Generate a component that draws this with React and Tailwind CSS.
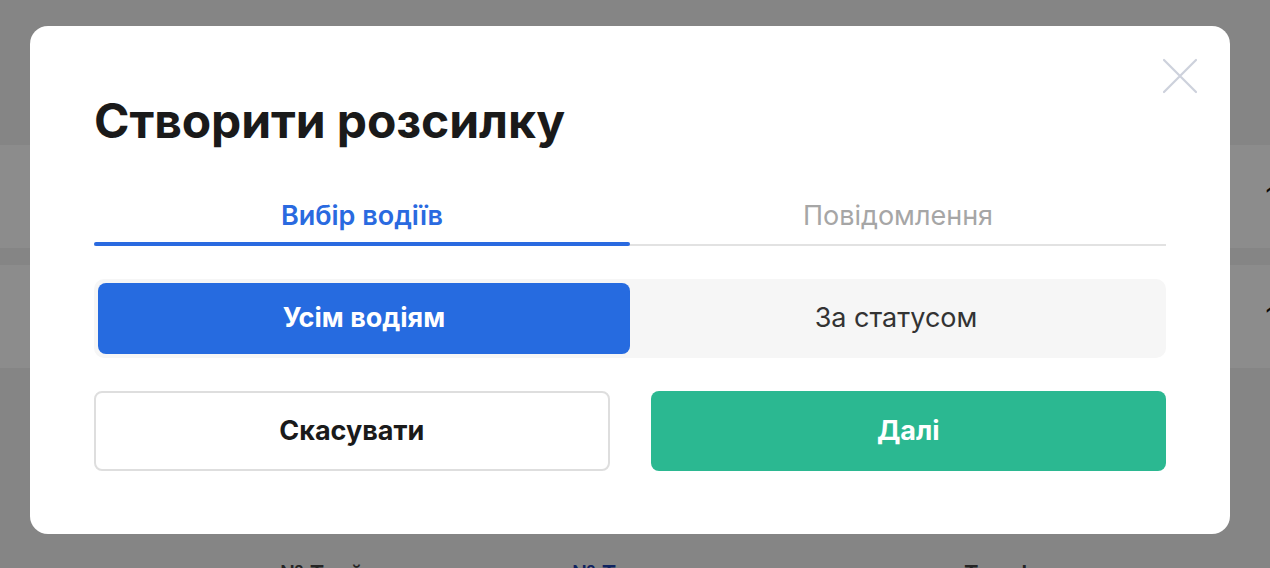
import React from "react";

export default function App() {
  return (
    <div
      className="relative w-full h-[568px] overflow-hidden bg-[#f3f3f3]"
      style={{ fontFamily: "Inter, 'Noto Sans', sans-serif" }}
    >
      {/* page behind the overlay */}
      <div className="flex flex-col pt-[145px]">
        <div className="flex h-[103px] items-center justify-end bg-white">
          <span className="translate-x-[6px] text-[26px] text-[#111]">1</span>
        </div>
        <div className="h-[17px]" />
        <div className="flex h-[103px] items-center justify-end bg-white">
          <span className="translate-x-[6px] text-[26px] text-[#111]">1</span>
        </div>
        <div className="flex pl-[280px] pt-[189px] text-[22px] font-semibold">
          <span className="w-[292px] text-[#444]">№ Трейлера</span>
          <span className="w-[392px] text-[#1e40af]">№ Тягача</span>
          <span className="text-[#444]">Телефон</span>
        </div>
      </div>

      {/* overlay */}
      <div className="absolute inset-0 bg-black/45" />

      {/* modal */}
      <div className="absolute left-[30px] top-[26px] h-[508px] w-[1200px] rounded-[18px] bg-white px-16 pt-[64px]">
        <button className="absolute right-[32px] top-[32px] flex h-[36px] w-[36px] items-center justify-center">
          <svg width="36" height="36" viewBox="0 0 36 36" fill="none">
            <path d="M2 2 L34 34 M34 2 L2 34" stroke="#cdd1dc" strokeWidth="2.2" strokeLinecap="round" />
          </svg>
        </button>

        <h2 className="text-[48px] font-bold leading-[62px] tracking-[-0.1px] text-[#1a1a1a]">
          Створити розсилку
        </h2>

        <div className="mt-[37px] grid grid-cols-2 border-b-2 border-[#e2e2e2]">
          <div className="relative flex h-[55px] items-start justify-center pt-[10px]">
            <span className="text-[27px] font-semibold leading-[34px] text-[#2a6ae0]">Вибір водіїв</span>
            <div className="absolute -bottom-[2px] left-0 right-0 h-[4px] rounded-full bg-[#2a6ae0]" />
          </div>
          <div className="flex h-[55px] items-start justify-center pt-[10px]">
            <span className="text-[27px] font-normal leading-[34px] text-[#a6a6a6]">Повідомлення</span>
          </div>
        </div>

        <div className="mt-[33px] grid h-[79px] grid-cols-2 rounded-[10px] bg-[#f6f6f6] p-1">
          <div className="flex items-center justify-center rounded-[8px] bg-[#266be0] text-[27px] font-bold text-white">
            Усім водіям
          </div>
          <div className="flex items-center justify-center text-[27px] font-normal text-[#333]">
            За статусом
          </div>
        </div>

        <div className="mt-[33px] grid grid-cols-2 gap-[41px]">
          <button className="flex h-[80px] items-center justify-center rounded-[8px] border-2 border-[#dedede] bg-white text-[27px] font-bold text-[#1a1a1a]">
            Скасувати
          </button>
          <button className="flex h-[80px] items-center justify-center rounded-[8px] bg-[#2bb891] text-[27px] font-bold text-white">
            Далі
          </button>
        </div>
      </div>
    </div>
  );
}
